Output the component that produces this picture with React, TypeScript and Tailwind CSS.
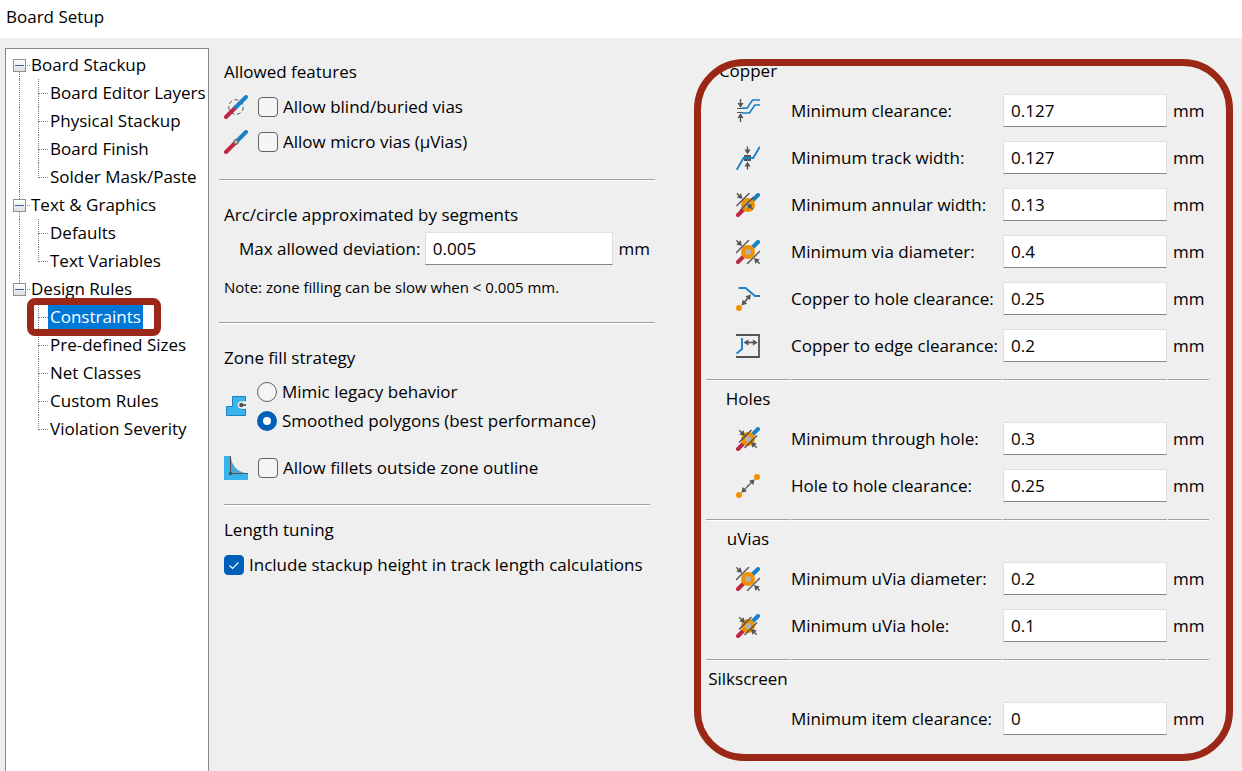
import React, { useState } from 'react';

const GRAY = '#545454';
const BLUE = '#1a81c4';
const RED = '#bf2641';
const ORANGE = '#f29100';

type IconProps = { children: React.ReactNode };

const Icon = ({ children }: IconProps) => (
  <svg width="24" height="24" viewBox="0 0 24 24" fill="none" className="shrink-0" aria-hidden="true">
    {children}
  </svg>
);

// Small arrow with its tip at the origin, rotated into place
const Arrow = ({ x, y, angle, tail = 8 }: { x: number; y: number; angle: number; tail?: number }) => (
  <g transform={`translate(${x} ${y}) rotate(${angle})`}>
    <path d={`M-4 0H${-tail}`} stroke={GRAY} strokeWidth="1.4" />
    <path d="M0 0L-5 -3V3Z" fill={GRAY} />
  </g>
);

const Track = ({ width = 4 }: { width?: number }) => (
  <>
    <path d="M2 22L12 12" stroke={RED} strokeWidth={width} strokeLinecap="round" />
    <path d="M12 12L22 2" stroke={BLUE} strokeWidth={width} strokeLinecap="round" />
  </>
);

const Via = () => (
  <>
    <Track />
    <circle cx="12" cy="12" r="7" fill={ORANGE} />
    <circle cx="12" cy="12" r="3" fill="#b3b3b3" />
  </>
);

const BlindViaIcon = () => (
  <Icon>
    <circle cx="12" cy="12" r="7.3" stroke={GRAY} strokeWidth="1" strokeDasharray="4 2.5" />
    <Track />
  </Icon>
);

const MicroViaIcon = () => (
  <Icon>
    <Track />
    <circle cx="12" cy="12" r="2.4" fill="#b3b3b3" stroke={GRAY} />
  </Icon>
);

const ZoneFillIcon = () => (
  <Icon>
    <path
      d="M2.5 12.5H8.5V2.5H21.5V7.5H17.5A3.8 3.8 0 0 0 17.5 15H21.5V21.5H2.5Z"
      fill="#39b4ea"
      stroke={BLUE}
    />
    <path d="M22 7.2H17.5A3.8 3.8 0 0 0 17.5 14.8H22Z" fill="#efefef" />
    <circle cx="17.3" cy="11" r="2.2" fill={GRAY} />
    <path d="M17 11H22" stroke={GRAY} strokeWidth="1.8" />
  </Icon>
);

const FilletIcon = () => (
  <Icon>
    <path d="M0 0H6.5V17.5H24V24H0Z" fill="#39b4ea" />
    <path d="M6.5 0C8 10 13 16 24 17.5H6.5Z" fill="#4ca7d8" />
    <path d="M6.5 0V17.5H24" stroke={GRAY} strokeWidth="1.1" />
    <rect x="5" y="16" width="3" height="3" fill={GRAY} />
  </Icon>
);

const ClearanceIcon = () => (
  <Icon>
    <path d="M1 9.5H7M1 13.5H7" stroke={GRAY} />
    <path d="M6 9.2H11L16.5 1H24M6 14H13.5L18.8 6H24" stroke={BLUE} strokeWidth="1.7" />
    <Arrow x={4.5} y={9} angle={90} tail={9} />
    <Arrow x={4.5} y={14} angle={-90} tail={9} />
  </Icon>
);

const TrackWidthIcon = () => (
  <Icon>
    <rect x="8" y="9" width="7" height="6" fill={GRAY} />
    <path d="M0.8 23.8L7.5 12H17.2L23.8 0.8" stroke={BLUE} strokeWidth="1.8" />
    <Arrow x={11.5} y={8.5} angle={90} />
    <Arrow x={11.5} y={15.5} angle={-90} />
  </Icon>
);

const AnnularWidthIcon = () => (
  <Icon>
    <Via />
    <path d="M0.5 13L13.5 0M4.5 17L17.5 4" stroke={GRAY} strokeWidth="1.4" />
    <Arrow x={6.5} y={6} angle={45} />
    <Arrow x={11} y={10.5} angle={-135} />
  </Icon>
);

const ViaDiameterIcon = () => (
  <Icon>
    <Via />
    <path d="M0 13L13 0M11 24L24 11" stroke={GRAY} strokeWidth="1.4" />
    <Arrow x={6} y={6} angle={45} />
    <Arrow x={18} y={18} angle={-135} />
  </Icon>
);

const ViaHoleIcon = () => (
  <Icon>
    <Via />
    <path d="M3 15.5L15.5 3M8.5 21L21 8.5" stroke={GRAY} strokeWidth="1.4" />
    <Arrow x={9} y={9} angle={45} />
    <Arrow x={15} y={15} angle={-135} />
  </Icon>
);

const HoleClearanceIcon = () => (
  <Icon>
    <path d="M2.5 1H9.5L19 9H24" stroke={BLUE} strokeWidth="1.8" />
    <circle cx="3" cy="21" r="3" fill={ORANGE} />
    <Arrow x={15} y={7.5} angle={-48} />
    <Arrow x={5.5} y={18.5} angle={132} />
  </Icon>
);

const EdgeClearanceIcon = () => (
  <Icon>
    <path d="M0 1H23V23H0" stroke={GRAY} strokeWidth="1.8" />
    <path d="M6 4V15L0.5 19.5" stroke={BLUE} strokeWidth="1.9" />
    <Arrow x={7.5} y={8.5} angle={180} />
    <Arrow x={21.8} y={8.5} angle={0} />
  </Icon>
);

const HoleToHoleIcon = () => (
  <Icon>
    <circle cx="3" cy="21" r="3" fill={ORANGE} />
    <circle cx="21" cy="3" r="3" fill={ORANGE} />
    <Arrow x={18.7} y={5.3} angle={-45} tail={10} />
    <Arrow x={5.3} y={18.7} angle={135} tail={10} />
  </Icon>
);

const tree = [
  {
    label: 'Board Stackup',
    children: ['Board Editor Layers', 'Physical Stackup', 'Board Finish', 'Solder Mask/Paste'],
  },
  { label: 'Text & Graphics', children: ['Defaults', 'Text Variables'] },
  {
    label: 'Design Rules',
    children: ['Constraints', 'Pre-defined Sizes', 'Net Classes', 'Custom Rules', 'Violation Severity'],
  },
];

const constraintGroups = [
  {
    title: 'Copper',
    rows: [
      { label: 'Minimum clearance:', value: '0.127', icon: <ClearanceIcon /> },
      { label: 'Minimum track width:', value: '0.127', icon: <TrackWidthIcon /> },
      { label: 'Minimum annular width:', value: '0.13', icon: <AnnularWidthIcon /> },
      { label: 'Minimum via diameter:', value: '0.4', icon: <ViaDiameterIcon /> },
      { label: 'Copper to hole clearance:', value: '0.25', icon: <HoleClearanceIcon /> },
      { label: 'Copper to edge clearance:', value: '0.2', icon: <EdgeClearanceIcon /> },
    ],
  },
  {
    title: 'Holes',
    rows: [
      { label: 'Minimum through hole:', value: '0.3', icon: <ViaHoleIcon /> },
      { label: 'Hole to hole clearance:', value: '0.25', icon: <HoleToHoleIcon /> },
    ],
  },
  {
    title: 'uVias',
    rows: [
      { label: 'Minimum uVia diameter:', value: '0.2', icon: <ViaDiameterIcon /> },
      { label: 'Minimum uVia hole:', value: '0.1', icon: <ViaHoleIcon /> },
    ],
  },
  {
    title: 'Silkscreen',
    rows: [{ label: 'Minimum item clearance:', value: '0', icon: null }],
  },
];

const Separator = () => <div className="h-0.5 border-t border-[#a0a0a0] bg-white" />;

const inputClass =
  'h-[33px] w-full min-w-0 border border-[#e0e0e0] border-b-[#868686] bg-white px-[7px] outline-none';

const CheckBox = ({ label, defaultChecked = false }: { label: string; defaultChecked?: boolean }) => (
  <label className="flex items-center gap-[5px]">
    <span className="grid shrink-0">
      <input
        type="checkbox"
        defaultChecked={defaultChecked}
        className="peer size-5 appearance-none rounded border border-[#626262] bg-[#f5f5f5] [grid-area:1/1] checked:border-[#005fb8] checked:bg-[#005fb8]"
      />
      <svg viewBox="0 0 20 20" fill="none" className="pointer-events-none invisible size-5 [grid-area:1/1] peer-checked:visible">
        <path d="M5.5 10.5L8.5 13.5L14.5 7.5" stroke="white" strokeWidth="1.1" />
      </svg>
    </span>
    {label}
  </label>
);

const RadioButton = ({ label, defaultChecked = false }: { label: string; defaultChecked?: boolean }) => (
  <label className="flex h-[29px] items-center gap-[5px]">
    <input
      type="radio"
      name="zone-fill"
      defaultChecked={defaultChecked}
      className="size-5 shrink-0 appearance-none rounded-full border border-[#626262] bg-[#f5f5f5] checked:border-[6px] checked:border-[#005fb8] checked:bg-white"
    />
    {label}
  </label>
);

const Sidebar = () => {
  const [selected, setSelected] = useState('Constraints');

  return (
    <nav className="w-[204px] shrink-0 border border-b-0 border-[#828790] bg-white pt-0.5 pl-[7px] whitespace-nowrap">
      <ul>
        {tree.map((group, groupIndex) => {
          const lastGroup = groupIndex === tree.length - 1;
          return (
            <li key={group.label}>
              <div className="flex h-7 items-center">
                <div className="flex h-7 w-[13px] flex-col">
                  <span className={`ml-1.5 flex-1 border-dotted border-[#808080] ${groupIndex > 0 ? 'border-l' : ''}`} />
                  <button
                    aria-label={`Collapse ${group.label}`}
                    className="flex size-[13px] items-center justify-center border border-[#919191] bg-linear-to-b from-white to-[#dedede]"
                  >
                    <span className="h-px w-[9px] bg-[#3f5fb0]" />
                  </button>
                  <span className={`ml-1.5 flex-1 border-dotted border-[#808080] ${lastGroup ? '' : 'border-l'}`} />
                </div>
                <span className="mx-px w-[3px] border-t border-dotted border-[#808080]" />
                {group.label}
              </div>
              <ul>
                {group.children.map((child, i) => {
                  const lastChild = i === group.children.length - 1;
                  return (
                    <li key={child} className="relative flex h-7">
                      <span className={`mr-[18px] ml-1.5 w-px border-dotted border-[#808080] ${lastGroup ? '' : 'border-l'}`} />
                      <span className="flex w-[10px] flex-col">
                        <span className="h-[15px] border-b border-l border-dotted border-[#808080]" />
                        <span className={`flex-1 border-dotted border-[#808080] ${lastChild ? '' : 'border-l'}`} />
                      </span>
                      <button
                        onClick={() => setSelected(child)}
                        className={`px-0.5 ${selected === child ? 'bg-[#0078d7] text-white' : ''}`}
                      >
                        {child}
                      </button>
                      {child === 'Constraints' && (
                        <span className="pointer-events-none absolute -inset-y-[5px] left-3.5 z-10 w-[134px] rounded-lg border-[7px] border-[#9b2817]" />
                      )}
                    </li>
                  );
                })}
              </ul>
            </li>
          );
        })}
      </ul>
    </nav>
  );
};

const BoardOptions = () => (
  <section className="ml-[10px] w-[436px] shrink-0 pt-2.5">
    <div className="px-[5px] pb-5">
      <h2 className="mb-[3px]">Allowed features</h2>
      <div className="flex h-[35px] items-center gap-2.5">
        <BlindViaIcon />
        <CheckBox label="Allow blind/buried vias" />
      </div>
      <div className="flex h-[35px] items-center gap-2.5">
        <MicroViaIcon />
        <CheckBox label="Allow micro vias (µVias)" />
      </div>
    </div>
    <Separator />
    <div className="px-[5px] py-5">
      <h2 className="mb-[3px]">Arc/circle approximated by segments</h2>
      <div className="flex items-center pl-[15px]">
        <label htmlFor="deviation" className="w-[186px] whitespace-nowrap">
          Max allowed deviation:
        </label>
        <div className="mr-1.5 w-[188px]">
          <input id="deviation" defaultValue="0.005" className={inputClass} />
        </div>
        mm
      </div>
      <p className="mt-2 mb-px text-[15px] leading-7">Note: zone filling can be slow when &lt; 0.005 mm.</p>
    </div>
    <Separator />
    <div className="px-[5px] pt-5 pb-[19px]">
      <h2 className="mb-[5px]">Zone fill strategy</h2>
      <div className="flex items-center gap-[9px]">
        <ZoneFillIcon />
        <div>
          <RadioButton label="Mimic legacy behavior" />
          <RadioButton label="Smoothed polygons (best performance)" defaultChecked />
        </div>
      </div>
      <div className="mt-[15px] flex h-[35px] items-center gap-2.5">
        <FilletIcon />
        <CheckBox label="Allow fillets outside zone outline" />
      </div>
    </div>
    <div className="px-[5px]">
      <Separator />
      <h2 className="mt-2.5 mb-[3px]">Length tuning</h2>
      <div className="flex h-[35px] items-center">
        <CheckBox label="Include stackup height in track length calculations" defaultChecked />
      </div>
    </div>
  </section>
);

const Constraints = () => (
  <section className="relative mt-[21px] mb-2.5 ml-[39px] min-w-0 flex-1 pr-6 pl-3">
    {constraintGroups.map((group, groupIndex) => (
      <div key={group.title} className="grid grid-cols-[84px_211px_1fr_41px] gap-x-px pb-2.5 whitespace-nowrap last:pb-0">
        {groupIndex > 0 && (
          <>
            <Separator />
            <Separator />
            <Separator />
            <Separator />
          </>
        )}
        <h2 className={`col-span-4 w-[84px] text-center ${groupIndex > 0 ? 'pt-1 pb-0.5' : '-mt-0.5 mb-0.5'}`}>
          {group.title}
        </h2>
        {group.rows.map((row) => {
          const id = row.label.replace(':', '').replace(/ /g, '-').toLowerCase();
          return (
            <React.Fragment key={id}>
              <div className="flex h-[47px] items-center justify-center">{row.icon}</div>
              <label htmlFor={id} className="flex items-center">
                {row.label}
              </label>
              <div className="flex items-center">
                <input id={id} defaultValue={row.value} className={inputClass} />
              </div>
              <span className="flex items-center pl-[5px]">mm</span>
            </React.Fragment>
          );
        })}
      </div>
    ))}
    {/* Highlight frame */}
    <div className="pointer-events-none absolute inset-0 rounded-[50px] border-[7px] border-[#9b2817]" />
  </section>
);

const App = () => (
  <div className="flex min-h-screen flex-col bg-[#efefef] font-['Open_Sans','Noto_Sans',sans-serif] text-[17px] leading-7 text-black">
    <header className="bg-white px-1.5 pt-[3px] pb-[7px]">
      <h1>Board Setup</h1>
    </header>
    <main className="flex flex-1 pr-[9px] pl-[5px]">
      <div className="flex pt-2.5">
        <Sidebar />
        <BoardOptions />
      </div>
      <Constraints />
    </main>
  </div>
);

export default App;
